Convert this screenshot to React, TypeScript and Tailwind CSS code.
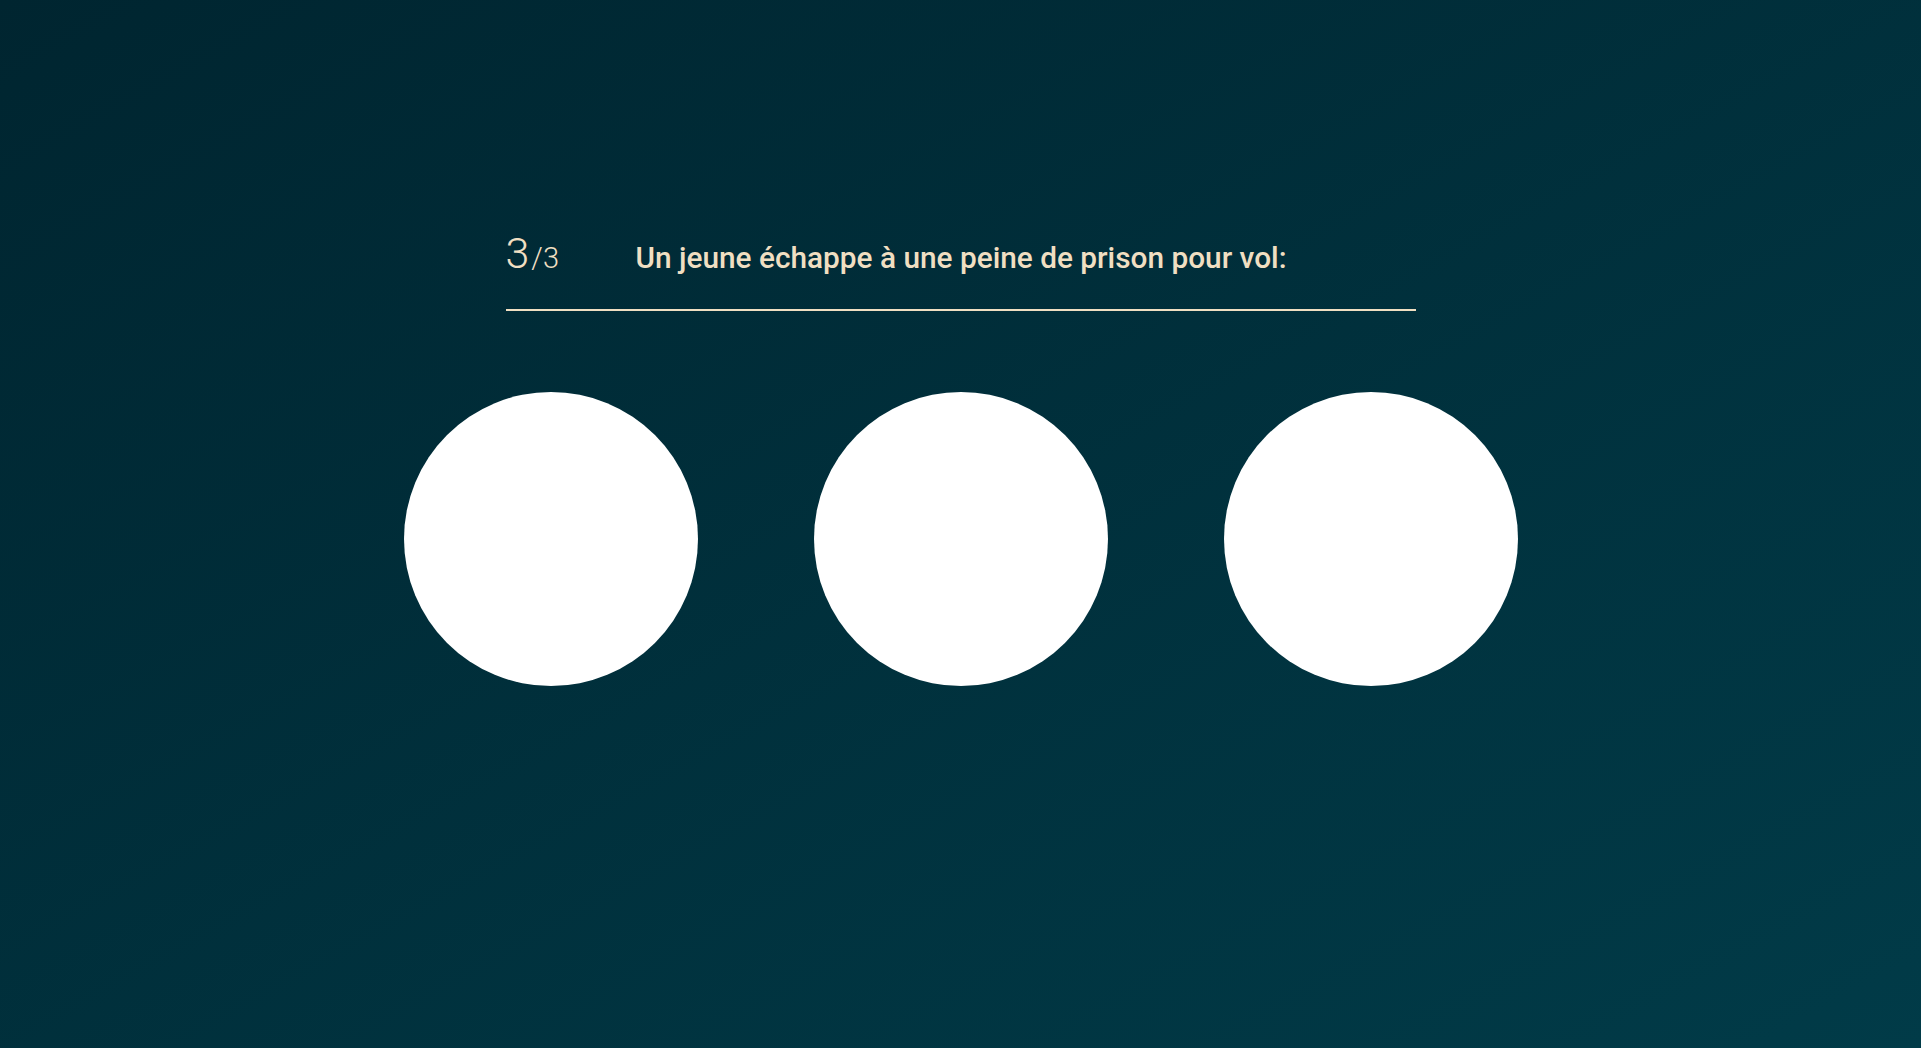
export default function App() {
  return (
    <div
      className="flex min-h-screen w-full flex-col items-center bg-linear-to-br from-[#002530] to-[#013b48] pt-[232px]"
      style={{ fontFamily: "Roboto, 'Liberation Sans', sans-serif" }}
    >
      <header className="flex w-[910px] items-baseline border-b-2 border-[#f0dfc2] pb-[34px] text-[#f0dfc2]">
        <div className="w-[130px] font-light leading-none">
          <span className="text-[43px]">3</span>
          <span className="pl-[2px] text-[29px]">/3</span>
        </div>
        <h1 className="text-[29.8px] font-medium leading-none">
          Un jeune échappe à une peine de prison pour vol:
        </h1>
      </header>
      <div className="mt-[81px] flex gap-[116px]">
        <button className="h-[294px] w-[294px] rounded-full bg-white" />
        <button className="h-[294px] w-[294px] rounded-full bg-white" />
        <button className="h-[294px] w-[294px] rounded-full bg-white" />
      </div>
    </div>
  );
}
